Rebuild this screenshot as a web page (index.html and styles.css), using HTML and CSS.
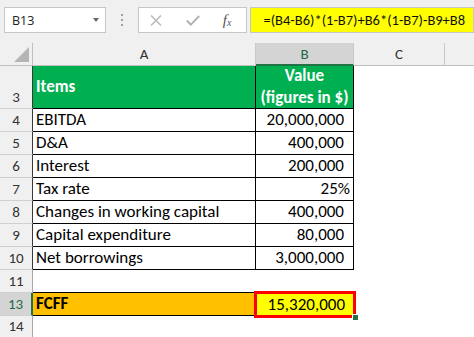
FILE: index.html
```html
<!DOCTYPE html>
<html>
<head>
<meta charset="utf-8">
<link rel="stylesheet" href="styles.css">
</head>
<body>
<div class="app">
  <div class="fbar">
    <div class="namebox"><span class="ref">B13</span><span class="caret"></span></div>
    <div class="grip"><i></i><i></i><i></i></div>
    <div class="fbtns">
      <svg class="ico-x" width="14" height="11" viewBox="0 0 14 11"><path d="M2 0.5 L12 10.5 M12 0.5 L2 10.5" stroke="#bdbdbd" stroke-width="1.6" fill="none"/></svg>
      <svg class="ico-ok" width="14" height="11" viewBox="0 0 14 11"><path d="M0.8 5.5 L4.8 9.6 L13.2 1" stroke="#b0b0b0" stroke-width="1.8" fill="none"/></svg>
      <span class="fx">f<sub>x</sub></span>
    </div>
    <div class="formula">=(B4-B6)*(1-B7)+B6*(1-B7)-B9+B8</div>
  </div>
  <div class="sheet">
    <div class="hd corner"><span class="tri"></span></div>
    <div class="hd ch">A</div>
    <div class="hd ch sel">B</div>
    <div class="hd ch">C</div>
    <div class="hd ch last"></div>

    <div class="rh dark">3</div>
    <div class="c green bd items">Items</div>
    <div class="c green bd val">Value<br>(figures in $)</div>

    <div class="rh dark">4</div>
    <div class="c bd">EBITDA</div>
    <div class="c bd num">20,000,000</div>

    <div class="rh dark">5</div>
    <div class="c bd">D&amp;A</div>
    <div class="c bd num">400,000</div>

    <div class="rh dark">6</div>
    <div class="c bd">Interest</div>
    <div class="c bd num">200,000</div>

    <div class="rh dark">7</div>
    <div class="c bd">Tax rate</div>
    <div class="c bd num pct">25%</div>

    <div class="rh dark">8</div>
    <div class="c bd">Changes in working capital</div>
    <div class="c bd num">400,000</div>

    <div class="rh dark">9</div>
    <div class="c bd">Capital expenditure</div>
    <div class="c bd num">80,000</div>

    <div class="rh dark">10</div>
    <div class="c bd">Net borrowings</div>
    <div class="c bd num">3,000,000</div>

    <div class="rh">11</div>
    <div class="c bb"></div>
    <div class="c"></div>

    <div class="rh dark selr">13</div>
    <div class="c orange bb fcff">FCFF</div>
    <div class="c yellow num active">15,320,000<span class="handle"></span></div>

    <div class="rh">14</div>
  </div>
</div>
</body>
</html>
```

FILE: styles.css
```css
html, body {
  margin: 0;
  padding: 0;
  background: #ffffff;
}
.app {
  width: 474px;
  height: 337px;
  overflow: hidden;
  font-family: Carlito, Lato, "Liberation Sans", sans-serif;
}
.fbar {
  height: 43px;
  box-sizing: border-box;
  padding-top: 7px;
  display: flex;
  align-items: flex-start;
  background: #f0f0f0;
}
.namebox {
  margin-left: 4px;
  width: 102px;
  height: 26px;
  box-sizing: border-box;
  border: 1px solid #c6c6c6;
  background: #fff;
  display: flex;
  align-items: center;
  justify-content: space-between;
  padding: 0 6px 0 7px;
}
.ref {
  font-family: "Open Sans", sans-serif;
  font-size: 12.5px;
  color: #222;
}
.caret {
  width: 0;
  height: 0;
  border-left: 3.5px solid transparent;
  border-right: 3.5px solid transparent;
  border-top: 4px solid #666;
}
.grip {
  width: 32px;
  display: flex;
  flex-direction: column;
  align-items: center;
  gap: 3px;
  padding-top: 7px;
}
.grip i {
  width: 2px;
  height: 2px;
  background: #a0a0a0;
}
.fbtns {
  width: 110px;
  height: 26px;
  box-sizing: border-box;
  border: 1px solid #c6c6c6;
  background: #fff;
  display: flex;
  align-items: center;
  padding-left: 10px;
}
.ico-ok {
  margin-left: 23px;
}
.fx {
  margin-left: 23px;
  font-family: "Liberation Serif", serif;
  font-style: italic;
  font-size: 15px;
  color: #555;
  line-height: 1;
}
.fx sub {
  font-size: 10px;
  vertical-align: -1px;
}
.formula {
  margin-left: 3px;
  width: 224px;
  height: 26px;
  box-sizing: border-box;
  border: 1px solid #c6c6c6;
  background: #ffff00;
  padding-left: 12px;
  font-size: 14.5px;
  line-height: 24px;
  color: #111;
  white-space: nowrap;
  overflow: hidden;
}
.sheet {
  height: 294px;
  display: grid;
  grid-template-columns: 33px 223px 98px 91px 1fr;
  grid-template-rows: 23px 43px repeat(9, 23px) 1fr;
  background: #fff;
}
.hd {
  box-sizing: border-box;
  background: #f0f0f0;
  border-bottom: 1px solid #bfbfbf;
  border-right: 1px solid #c8c8c8;
  display: flex;
  align-items: center;
  justify-content: center;
  font-size: 15px;
  color: #333;
}
.hd.last {
  border-right: none;
}
.corner {
  position: relative;
  border-right-color: #bfbfbf;
}
.tri {
  position: absolute;
  right: 3px;
  bottom: 3px;
  width: 0;
  height: 0;
  border-left: 15px solid transparent;
  border-bottom: 15px solid #b5b5b5;
}
.hd.sel {
  background: #d4d4d4;
  color: #1e6b43;
  border-bottom: 2px solid #217346;
}
.rh {
  grid-column: 1;
  box-sizing: border-box;
  background: #f0f0f0;
  border-bottom: 1px solid #cfcfcf;
  border-right: 1px solid #a8a8a8;
  display: flex;
  align-items: flex-end;
  justify-content: center;
  padding-bottom: 1px;
  font-size: 15px;
  line-height: 20px;
  color: #333;
}
.rh.dark {
  border-right-color: #3a3a3a;
}
.rh.selr {
  background: #d4d4d4;
  color: #1e6b43;
  border-right: 2px solid #217346;
}
.c {
  box-sizing: border-box;
  display: flex;
  align-items: flex-end;
  padding: 0 3px 1px 3px;
  font-size: 17px;
  line-height: 20px;
  color: #000;
  white-space: nowrap;
  min-width: 0;
}
.bd {
  border-right: 1px solid #000;
  border-bottom: 1px solid #000;
}
.bb {
  border-bottom: 1px solid #000;
}
.green {
  background: #00b050;
  color: #fff;
  font-weight: bold;
}
.items {
  align-items: center;
  padding-bottom: 0;
}
.val {
  align-items: center;
  justify-content: center;
  text-align: center;
  line-height: 22px;
  padding: 0;
}
.num {
  justify-content: flex-end;
  padding-right: 9px;
}
.num.pct {
  padding-right: 3px;
}
.orange {
  background: #ffc000;
}
.fcff {
  font-weight: bold;
}
.yellow {
  background: #ffff00;
}
.active {
  position: relative;
  z-index: 2;
  outline: 3px solid #ff0000;
  outline-offset: -1px;
}
.handle {
  position: absolute;
  right: -4px;
  bottom: -4px;
  width: 5px;
  height: 5px;
  background: #217346;
  border: 1px solid #fff;
  border-right: none;
  border-bottom: none;
}
```
